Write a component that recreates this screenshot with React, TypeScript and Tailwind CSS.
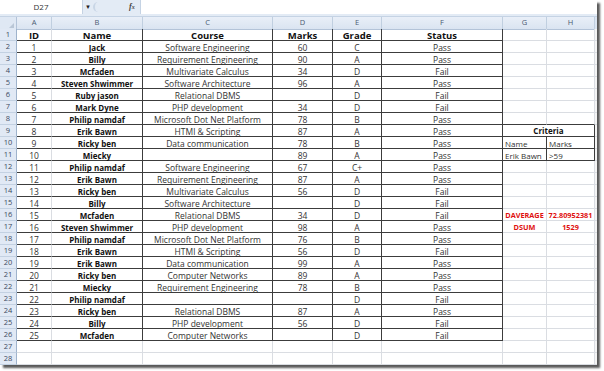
import React from 'react';

type Row = [string, string, string, string, string, string];

const data: Row[] = [
  ['1', 'Jack', 'Software Engineering', '60', 'C', 'Pass'],
  ['2', 'Billy', 'Requirement Engineering', '90', 'A', 'Pass'],
  ['3', 'Mcfaden', 'Multivariate Calculus', '34', 'D', 'Fail'],
  ['4', 'Steven Shwimmer', 'Software Architecture', '96', 'A', 'Pass'],
  ['5', 'Ruby jason', 'Relational DBMS', '', 'D', 'Fail'],
  ['6', 'Mark Dyne', 'PHP development', '34', 'D', 'Fail'],
  ['7', 'Philip namdaf', 'Microsoft Dot Net Platform', '78', 'B', 'Pass'],
  ['8', 'Erik Bawn', 'HTMl & Scripting', '87', 'A', 'Pass'],
  ['9', 'Ricky ben', 'Data communication', '78', 'B', 'Pass'],
  ['10', 'Miecky', '', '89', 'A', 'Pass'],
  ['11', 'Philip namdaf', 'Software Engineering', '67', 'C+', 'Pass'],
  ['12', 'Erik Bawn', 'Requirement Engineering', '87', 'A', 'Pass'],
  ['13', 'Ricky ben', 'Multivariate Calculus', '56', 'D', 'Fail'],
  ['14', 'Billy', 'Software Architecture', '', 'D', 'Fail'],
  ['15', 'Mcfaden', 'Relational DBMS', '34', 'D', 'Fail'],
  ['16', 'Steven Shwimmer', 'PHP development', '98', 'A', 'Pass'],
  ['17', 'Philip namdaf', 'Microsoft Dot Net Platform', '76', 'B', 'Pass'],
  ['18', 'Erik Bawn', 'HTMl & Scripting', '56', 'D', 'Fail'],
  ['19', 'Erik Bawn', 'Data communication', '99', 'A', 'Pass'],
  ['20', 'Ricky ben', 'Computer Networks', '89', 'A', 'Pass'],
  ['21', 'Miecky', 'Requirement Engineering', '78', 'B', 'Pass'],
  ['22', 'Philip namdaf', '', '', 'D', 'Fail'],
  ['23', 'Ricky ben', 'Relational DBMS', '87', 'A', 'Pass'],
  ['24', 'Billy', 'PHP development', '56', 'D', 'Fail'],
  ['25', 'Mcfaden', 'Computer Networks', '', 'D', 'Fail'],
];

const letters = ['A', 'B', 'C', 'D', 'E', 'F', 'G', 'H'];

// G/H side cells keyed by sheet row
const side: Record<number, { g?: string; h?: string; kind?: 'crit' | 'red' }> = {
  10: { g: 'Name', h: 'Marks', kind: 'crit' },
  11: { g: 'Erik Bawn', h: '>59', kind: 'crit' },
  16: { g: 'DAVERAGE', h: '72.80952381', kind: 'red' },
  17: { g: 'DSUM', h: '1529', kind: 'red' },
};

const DARK = 'border-[#3c3c3c]';
const LIGHT = 'border-[#dadde2]';

function Cell({ children, right, bottom, className = '' }: { children?: React.ReactNode; right: boolean; bottom: boolean; className?: string }) {
  return (
    <div
      className={`flex items-center overflow-visible whitespace-nowrap border-r border-b ${right ? 'border-r-[#3c3c3c]' : 'border-r-[#dadde2]'} ${bottom ? 'border-b-[#3c3c3c]' : 'border-b-[#dadde2]'} ${className}`}
    >
      <span className="leading-[11px] pt-[1px]">{children}</span>
    </div>
  );
}

export default function App() {
  const rows = Array.from({ length: 28 }, (_, i) => i + 1);

  return (
    <div className="w-[604px] h-[371px] bg-white font-['Open_Sans',sans-serif] text-[8px] text-[#222]">
      <div className="w-[597px] shadow-[3px_3px_2px_rgba(0,0,0,0.65)] bg-white">
        {/* formula bar */}
        <div className="flex h-[17px] bg-[#e3ebf5] border-b border-[#c5d3e4]">
          <div className="w-[83px] h-[14px] bg-white flex items-center justify-center text-[8px] text-[#333] border-r border-[#c5d3e4]">
            D27
          </div>
          <div className="w-[57px] h-[14px] flex items-center relative">
            <span className="ml-[2px] text-[6px] text-[#222]">▼</span>
            <span className="ml-[2px] w-[8px] h-[10px] border-l-2 border-[#c9d6e6] rounded-l-full" />
            <span className="ml-[28px] italic font-['Liberation_Serif',serif] font-bold text-[8px] text-[#444]">
              f<span className="text-[6px]">x</span>
            </span>
          </div>
          <div className="flex-1 h-[14px] bg-white border-l border-[#c5d3e4]" />
        </div>

        {/* sheet */}
        <div className="grid grid-cols-[17px_35px_91px_130px_60px_49px_121px_44px_48px_2px] auto-rows-[12px]">
          {/* column header row */}
          <div className="h-[13px] bg-[#dfe8f4] border-r border-b border-[#b3c3d8] flex items-end justify-end pr-[2px] pb-[1px]">
            <span className="w-0 h-0 border-l-[5px] border-l-transparent border-b-[5px] border-b-[#b9c6d6]" />
          </div>
          {letters.map((l) => (
            <div
              key={l}
              className="h-[13px] bg-gradient-to-b from-[#e9eff8] to-[#dae4f1] border-r border-b border-r-[#c0cfe0] border-b-[#b3c3d8] flex items-center justify-center text-[7.5px] text-[#4b5b72]"
            >
              {l}
            </div>
          ))}
          <div className="h-[13px] bg-[#dae4f1] border-b border-[#b3c3d8]" />

          {rows.map((r) => {
            const inTable = r <= 26;
            const isHead = r === 1;
            const d = r >= 2 && r <= 26 ? data[r - 2] : null;
            const vals: string[] = isHead ? ['ID', 'Name', 'Course', 'Marks', 'Grade', 'Status'] : d ? d : ['', '', '', '', '', ''];
            const s = side[r];
            const critRow = r >= 9 && r <= 11;
            const critBottom = r >= 8 && r <= 11;
            return (
              <React.Fragment key={r}>
                <div className="bg-[#e1e9f5] border-r border-b border-r-[#9fb3cc] border-b-[#c3d1e2] flex items-center justify-center text-[7.5px] text-[#3b4a60]">
                  {r}
                </div>
                {vals.map((v, c) => (
                  <Cell
                    key={c}
                    right={inTable && c > 0}
                    bottom={inTable}
                    className={`justify-center ${isHead ? 'font-bold text-[9.5px] text-[#111]' : c === 1 ? 'font-bold text-[8px] text-[#111]' : 'text-[8.5px] text-[#333]'}`}
                  >
                    {v}
                  </Cell>
                ))}
                {r === 9 ? (
                  <div className={`col-span-2 flex items-center justify-center border-r border-b ${DARK} font-bold text-[8px] text-[#111]`}>
                    Criteria
                  </div>
                ) : (
                  <>
                    <Cell
                      right={critRow}
                      bottom={critBottom}
                      className={s?.kind === 'red' ? 'justify-center font-bold text-[7.3px] text-[#e01010]' : 'justify-start pl-[2px] text-[8px] text-[#333]'}
                    >
                      {s?.g}
                    </Cell>
                    <Cell
                      right={critRow}
                      bottom={critBottom}
                      className={s?.kind === 'red' ? 'justify-center font-bold text-[7.3px] text-[#e01010]' : 'justify-start pl-[2px] text-[8px] text-[#333]'}
                    >
                      {s?.h}
                    </Cell>
                  </>
                )}
                <div className={`border-b ${LIGHT} bg-[#f4f4f4]`} />
              </React.Fragment>
            );
          })}
        </div>
      </div>
    </div>
  );
}
